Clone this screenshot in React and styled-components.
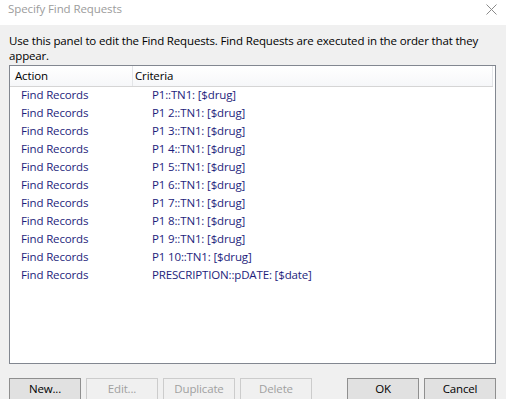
import React from "react";
import styled, { createGlobalStyle } from "styled-components";

const Global = createGlobalStyle`
  html, body { margin: 0; padding: 0; }
  body {
    width: 506px; height: 399px; overflow: hidden;
    background: #f0f0f0;
    font-family: "Open Sans", "Noto Sans", sans-serif;
  }
`;

const Window = styled.div`
  width: 506px; height: 399px;
  display: flex; flex-direction: column;
  background: #f0f0f0;
`;

const TitleBar = styled.div`
  height: 25px; flex: none; box-sizing: border-box;
  background: #ffffff;
  display: flex; align-items: flex-start; justify-content: space-between;
  padding: 0 9px 0 8px;
`;

const Title = styled.div`
  font-size: 11.5px; color: #9c9c9c; letter-spacing: -0.1px;
  line-height: 16px; margin-top: 1px;
`;

const Close = styled.svg`
  width: 11px; height: 11px; margin-top: 4px;
`;

const Body = styled.div`
  flex: 1; display: flex; flex-direction: column;
  padding: 8px 10px 0 9px;
`;

const Desc = styled.div`
  font-size: 11.5px; line-height: 15px; color: #000;
  letter-spacing: -0.15px;
`;

const ListBox = styled.div`
  margin-top: 2px;
  height: 299px; box-sizing: border-box;
  border: 1px solid #828790;
  background: #fff;
  display: flex; flex-direction: column;
`;

const Header = styled.div`
  display: grid; grid-template-columns: 123px 1fr;
  width: calc(100% - 2px);
  height: 21px; box-sizing: border-box;
  border-bottom: 1px solid #d5d5d5;
  background: linear-gradient(#ffffff, #f6f7f9);
`;

const HeadCell = styled.div`
  font-size: 11.5px; color: #000; line-height: 19px;
  padding-left: ${p => p.$pad}px;
  border-right: 1px solid #e3e5e8;
  letter-spacing: -0.15px;
`;

const Row = styled.div`
  display: grid; grid-template-columns: 131px 1fr;
  height: 18px; box-sizing: border-box; align-items: center;
  padding: 0 0 3px 11px;
  font-size: 11.5px; line-height: 15px; color: #1e1e7c; letter-spacing: -0.15px;
`;

const Buttons = styled.div`
  margin-top: 14px;
  display: flex; justify-content: space-between;
`;

const Group = styled.div`
  display: flex; gap: 5px;
`;

const Button = styled.button`
  width: 72px; height: 23px; box-sizing: border-box;
  padding: 0 0 3px 0;
  display: flex; align-items: center; justify-content: center;
  font-family: inherit; font-size: 11.5px; letter-spacing: -0.15px;
  line-height: 15px;
  background: ${p => (p.disabled ? "#f0f0f0" : "#e1e1e1")};
  border: 1px solid ${p => (p.disabled ? "#cccccc" : "#8f8f8f")};
  color: ${p => (p.disabled ? "#a0a0a0" : "#000")};
`;

const criteria = [
  "P1::TN1: [$drug]",
  "P1 2::TN1: [$drug]",
  "P1 3::TN1: [$drug]",
  "P1 4::TN1: [$drug]",
  "P1 5::TN1: [$drug]",
  "P1 6::TN1: [$drug]",
  "P1 7::TN1: [$drug]",
  "P1 8::TN1: [$drug]",
  "P1 9::TN1: [$drug]",
  "P1 10::TN1: [$drug]",
  "PRESCRIPTION::pDATE: [$date]",
];

export default function App() {
  return (
    <Window>
      <Global />
      <TitleBar>
        <Title>Specify Find Requests</Title>
        <Close viewBox="0 0 11 11">
          <path d="M0.5 0.5 L10.5 10.5 M10.5 0.5 L0.5 10.5" stroke="#8a8a8a" strokeWidth="1" fill="none" />
        </Close>
      </TitleBar>
      <Body>
        <Desc>
          Use this panel to edit the Find Requests. Find Requests are executed in the order that they
          <br />
          appear.
        </Desc>
        <ListBox>
          <Header>
            <HeadCell $pad={5}>Action</HeadCell>
            <HeadCell $pad={2}>Criteria</HeadCell>
          </Header>
          {criteria.map((c, i) => (
            <Row key={i}>
              <span>Find Records</span>
              <span>{c}</span>
            </Row>
          ))}
        </ListBox>
        <Buttons>
          <Group>
            <Button>New...</Button>
            <Button disabled>Edit...</Button>
            <Button disabled>Duplicate</Button>
            <Button disabled>Delete</Button>
          </Group>
          <Group>
            <Button>OK</Button>
            <Button>Cancel</Button>
          </Group>
        </Buttons>
      </Body>
    </Window>
  );
}
